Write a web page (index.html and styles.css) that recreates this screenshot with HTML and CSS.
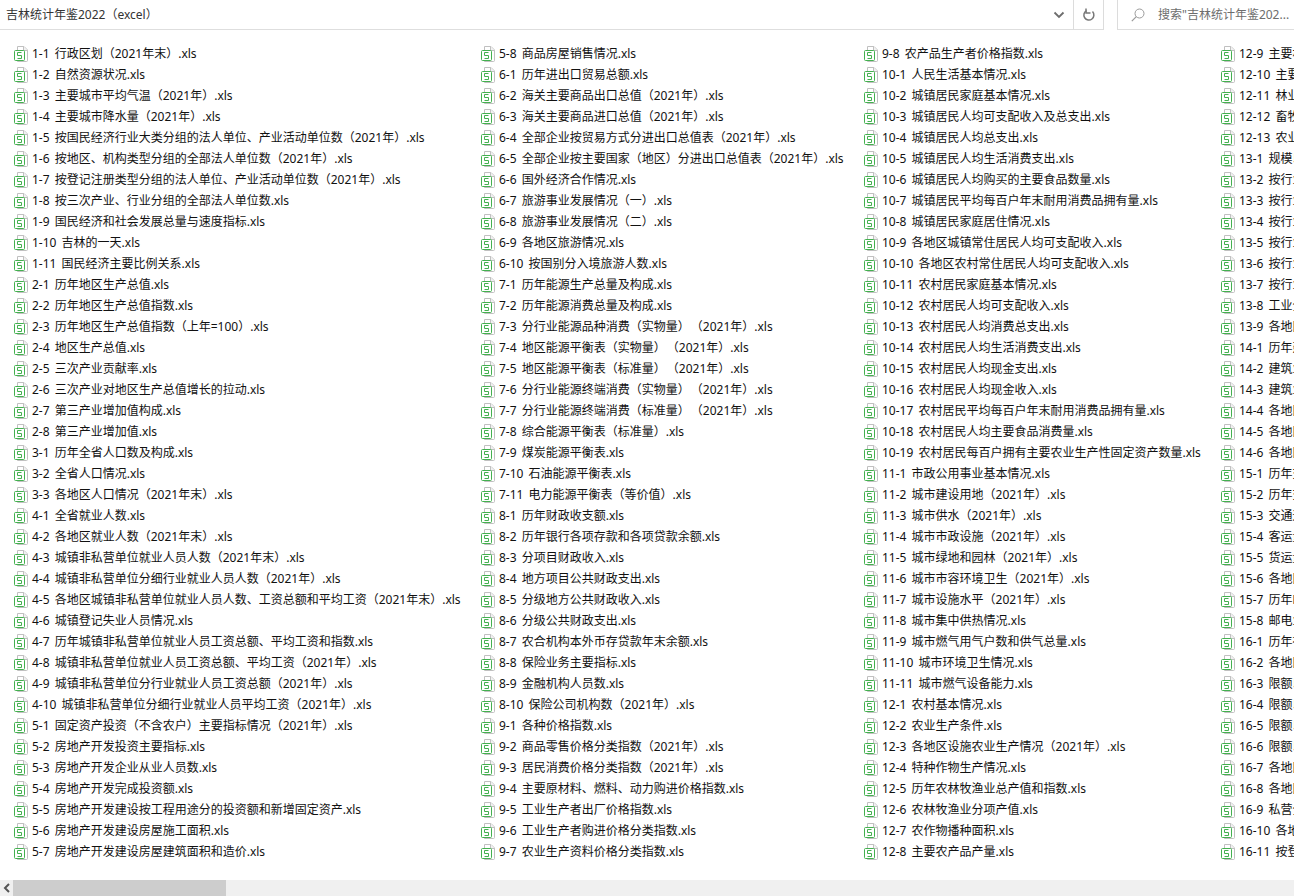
FILE: index.html
```html
<!DOCTYPE html>
<html lang="zh">
<head>
<meta charset="utf-8">
<title>吉林统计年鉴2022（excel）</title>
<link rel="stylesheet" href="styles.css">
</head>
<body>
<svg class="defs" width="0" height="0"><symbol id="xls" viewBox="0 0 14 16"><path d="M3.5 .5H10L13.500 4V14.500Q13.500 15.500 12.500 15.500H3.500Z" fill="#fff" stroke="#c0c0c0"/><path d="M9.500 .5V4.500H13.500" fill="#f2f2f2" stroke="#c0c0c0"/><rect x=".5" y="4.500" width="10" height="10" rx="1" fill="#fff" stroke="#43b04f"/><path d="M7.500 6.500H3.500V9.500H7.500V12.500H3.500" fill="none" stroke="#43b04f"/></symbol></svg>
<header class="bar">
<div class="path"><span class="title">吉林统计年鉴2022（excel）</span><svg class="chev" width="12" height="8" viewBox="0 0 12 8"><path d="M1.500 1.500L6 6L10.500 1.500" fill="none" stroke="#6d6d6d" stroke-width="1.800"/></svg></div>
<div class="refresh"><svg width="14" height="14" viewBox="0 0 14 14"><path d="M10.500 3.600A5 5 0 1 1 4.600 2.600" fill="none" stroke="#777" stroke-width="1.500"/><path d="M4 .5V5H8.500" fill="none" stroke="#777" stroke-width="1.500"/></svg></div>
<div class="search"><svg width="14" height="14" viewBox="0 0 14 14"><circle cx="8.500" cy="5.500" r="4.500" fill="none" stroke="#9b9b9b"/><path d="M5.300 8.700L.8 13.200" stroke="#9b9b9b" stroke-width="1.200"/></svg><span>搜索"吉林统计年鉴202...</span></div>
</header>
<main class="list">
<div class="col c1">
<div class="file"><svg><use href="#xls"/></svg><span>1-1 行政区划（2021年末）.xls</span></div>
<div class="file"><svg><use href="#xls"/></svg><span>1-2 自然资源状况.xls</span></div>
<div class="file"><svg><use href="#xls"/></svg><span>1-3 主要城市平均气温（2021年）.xls</span></div>
<div class="file"><svg><use href="#xls"/></svg><span>1-4 主要城市降水量（2021年）.xls</span></div>
<div class="file"><svg><use href="#xls"/></svg><span>1-5 按国民经济行业大类分组的法人单位、产业活动单位数（2021年）.xls</span></div>
<div class="file"><svg><use href="#xls"/></svg><span>1-6 按地区、机构类型分组的全部法人单位数（2021年）.xls</span></div>
<div class="file"><svg><use href="#xls"/></svg><span>1-7 按登记注册类型分组的法人单位、产业活动单位数（2021年）.xls</span></div>
<div class="file"><svg><use href="#xls"/></svg><span>1-8 按三次产业、行业分组的全部法人单位数.xls</span></div>
<div class="file"><svg><use href="#xls"/></svg><span>1-9 国民经济和社会发展总量与速度指标.xls</span></div>
<div class="file"><svg><use href="#xls"/></svg><span>1-10 吉林的一天.xls</span></div>
<div class="file"><svg><use href="#xls"/></svg><span>1-11 国民经济主要比例关系.xls</span></div>
<div class="file"><svg><use href="#xls"/></svg><span>2-1 历年地区生产总值.xls</span></div>
<div class="file"><svg><use href="#xls"/></svg><span>2-2 历年地区生产总值指数.xls</span></div>
<div class="file"><svg><use href="#xls"/></svg><span>2-3 历年地区生产总值指数（上年=100）.xls</span></div>
<div class="file"><svg><use href="#xls"/></svg><span>2-4 地区生产总值.xls</span></div>
<div class="file"><svg><use href="#xls"/></svg><span>2-5 三次产业贡献率.xls</span></div>
<div class="file"><svg><use href="#xls"/></svg><span>2-6 三次产业对地区生产总值增长的拉动.xls</span></div>
<div class="file"><svg><use href="#xls"/></svg><span>2-7 第三产业增加值构成.xls</span></div>
<div class="file"><svg><use href="#xls"/></svg><span>2-8 第三产业增加值.xls</span></div>
<div class="file"><svg><use href="#xls"/></svg><span>3-1 历年全省人口数及构成.xls</span></div>
<div class="file"><svg><use href="#xls"/></svg><span>3-2 全省人口情况.xls</span></div>
<div class="file"><svg><use href="#xls"/></svg><span>3-3 各地区人口情况（2021年末）.xls</span></div>
<div class="file"><svg><use href="#xls"/></svg><span>4-1 全省就业人数.xls</span></div>
<div class="file"><svg><use href="#xls"/></svg><span>4-2 各地区就业人数（2021年末）.xls</span></div>
<div class="file"><svg><use href="#xls"/></svg><span>4-3 城镇非私营单位就业人员人数（2021年末）.xls</span></div>
<div class="file"><svg><use href="#xls"/></svg><span>4-4 城镇非私营单位分细行业就业人员人数（2021年）.xls</span></div>
<div class="file"><svg><use href="#xls"/></svg><span>4-5 各地区城镇非私营单位就业人员人数、工资总额和平均工资（2021年末）.xls</span></div>
<div class="file"><svg><use href="#xls"/></svg><span>4-6 城镇登记失业人员情况.xls</span></div>
<div class="file"><svg><use href="#xls"/></svg><span>4-7 历年城镇非私营单位就业人员工资总额、平均工资和指数.xls</span></div>
<div class="file"><svg><use href="#xls"/></svg><span>4-8 城镇非私营单位就业人员工资总额、平均工资（2021年）.xls</span></div>
<div class="file"><svg><use href="#xls"/></svg><span>4-9 城镇非私营单位分行业就业人员工资总额（2021年）.xls</span></div>
<div class="file"><svg><use href="#xls"/></svg><span>4-10 城镇非私营单位分细行业就业人员平均工资（2021年）.xls</span></div>
<div class="file"><svg><use href="#xls"/></svg><span>5-1 固定资产投资（不含农户）主要指标情况（2021年）.xls</span></div>
<div class="file"><svg><use href="#xls"/></svg><span>5-2 房地产开发投资主要指标.xls</span></div>
<div class="file"><svg><use href="#xls"/></svg><span>5-3 房地产开发企业从业人员数.xls</span></div>
<div class="file"><svg><use href="#xls"/></svg><span>5-4 房地产开发完成投资额.xls</span></div>
<div class="file"><svg><use href="#xls"/></svg><span>5-5 房地产开发建设按工程用途分的投资额和新增固定资产.xls</span></div>
<div class="file"><svg><use href="#xls"/></svg><span>5-6 房地产开发建设房屋施工面积.xls</span></div>
<div class="file"><svg><use href="#xls"/></svg><span>5-7 房地产开发建设房屋建筑面积和造价.xls</span></div>
</div>
<div class="col c2">
<div class="file"><svg><use href="#xls"/></svg><span>5-8 商品房屋销售情况.xls</span></div>
<div class="file"><svg><use href="#xls"/></svg><span>6-1 历年进出口贸易总额.xls</span></div>
<div class="file"><svg><use href="#xls"/></svg><span>6-2 海关主要商品出口总值（2021年）.xls</span></div>
<div class="file"><svg><use href="#xls"/></svg><span>6-3 海关主要商品进口总值（2021年）.xls</span></div>
<div class="file"><svg><use href="#xls"/></svg><span>6-4 全部企业按贸易方式分进出口总值表（2021年）.xls</span></div>
<div class="file"><svg><use href="#xls"/></svg><span>6-5 全部企业按主要国家（地区）分进出口总值表（2021年）.xls</span></div>
<div class="file"><svg><use href="#xls"/></svg><span>6-6 国外经济合作情况.xls</span></div>
<div class="file"><svg><use href="#xls"/></svg><span>6-7 旅游事业发展情况（一）.xls</span></div>
<div class="file"><svg><use href="#xls"/></svg><span>6-8 旅游事业发展情况（二）.xls</span></div>
<div class="file"><svg><use href="#xls"/></svg><span>6-9 各地区旅游情况.xls</span></div>
<div class="file"><svg><use href="#xls"/></svg><span>6-10 按国别分入境旅游人数.xls</span></div>
<div class="file"><svg><use href="#xls"/></svg><span>7-1 历年能源生产总量及构成.xls</span></div>
<div class="file"><svg><use href="#xls"/></svg><span>7-2 历年能源消费总量及构成.xls</span></div>
<div class="file"><svg><use href="#xls"/></svg><span>7-3 分行业能源品种消费（实物量）<span class="nar"> </span>（2021年）.xls</span></div>
<div class="file"><svg><use href="#xls"/></svg><span>7-4 地区能源平衡表（实物量）<span class="nar"> </span>（2021年）.xls</span></div>
<div class="file"><svg><use href="#xls"/></svg><span>7-5 地区能源平衡表（标准量）<span class="nar"> </span>（2021年）.xls</span></div>
<div class="file"><svg><use href="#xls"/></svg><span>7-6 分行业能源终端消费（实物量）<span class="nar"> </span>（2021年）.xls</span></div>
<div class="file"><svg><use href="#xls"/></svg><span>7-7 分行业能源终端消费（标准量）<span class="nar"> </span>（2021年）.xls</span></div>
<div class="file"><svg><use href="#xls"/></svg><span>7-8 综合能源平衡表（标准量）.xls</span></div>
<div class="file"><svg><use href="#xls"/></svg><span>7-9 煤炭能源平衡表.xls</span></div>
<div class="file"><svg><use href="#xls"/></svg><span>7-10 石油能源平衡表.xls</span></div>
<div class="file"><svg><use href="#xls"/></svg><span>7-11 电力能源平衡表（等价值）.xls</span></div>
<div class="file"><svg><use href="#xls"/></svg><span>8-1 历年财政收支额.xls</span></div>
<div class="file"><svg><use href="#xls"/></svg><span>8-2 历年银行各项存款和各项贷款余额.xls</span></div>
<div class="file"><svg><use href="#xls"/></svg><span>8-3 分项目财政收入.xls</span></div>
<div class="file"><svg><use href="#xls"/></svg><span>8-4 地方项目公共财政支出.xls</span></div>
<div class="file"><svg><use href="#xls"/></svg><span>8-5 分级地方公共财政收入.xls</span></div>
<div class="file"><svg><use href="#xls"/></svg><span>8-6 分级公共财政支出.xls</span></div>
<div class="file"><svg><use href="#xls"/></svg><span>8-7 农合机构本外币存贷款年末余额.xls</span></div>
<div class="file"><svg><use href="#xls"/></svg><span>8-8 保险业务主要指标.xls</span></div>
<div class="file"><svg><use href="#xls"/></svg><span>8-9 金融机构人员数.xls</span></div>
<div class="file"><svg><use href="#xls"/></svg><span>8-10 保险公司机构数（2021年）.xls</span></div>
<div class="file"><svg><use href="#xls"/></svg><span>9-1 各种价格指数.xls</span></div>
<div class="file"><svg><use href="#xls"/></svg><span>9-2 商品零售价格分类指数（2021年）.xls</span></div>
<div class="file"><svg><use href="#xls"/></svg><span>9-3 居民消费价格分类指数（2021年）.xls</span></div>
<div class="file"><svg><use href="#xls"/></svg><span>9-4 主要原材料、燃料、动力购进价格指数.xls</span></div>
<div class="file"><svg><use href="#xls"/></svg><span>9-5 工业生产者出厂价格指数.xls</span></div>
<div class="file"><svg><use href="#xls"/></svg><span>9-6 工业生产者购进价格分类指数.xls</span></div>
<div class="file"><svg><use href="#xls"/></svg><span>9-7 农业生产资料价格分类指数.xls</span></div>
</div>
<div class="col c3">
<div class="file"><svg><use href="#xls"/></svg><span>9-8 农产品生产者价格指数.xls</span></div>
<div class="file"><svg><use href="#xls"/></svg><span>10-1 人民生活基本情况.xls</span></div>
<div class="file"><svg><use href="#xls"/></svg><span>10-2 城镇居民家庭基本情况.xls</span></div>
<div class="file"><svg><use href="#xls"/></svg><span>10-3 城镇居民人均可支配收入及总支出.xls</span></div>
<div class="file"><svg><use href="#xls"/></svg><span>10-4 城镇居民人均总支出.xls</span></div>
<div class="file"><svg><use href="#xls"/></svg><span>10-5 城镇居民人均生活消费支出.xls</span></div>
<div class="file"><svg><use href="#xls"/></svg><span>10-6 城镇居民人均购买的主要食品数量.xls</span></div>
<div class="file"><svg><use href="#xls"/></svg><span>10-7 城镇居民平均每百户年末耐用消费品拥有量.xls</span></div>
<div class="file"><svg><use href="#xls"/></svg><span>10-8 城镇居民家庭居住情况.xls</span></div>
<div class="file"><svg><use href="#xls"/></svg><span>10-9 各地区城镇常住居民人均可支配收入.xls</span></div>
<div class="file"><svg><use href="#xls"/></svg><span>10-10 各地区农村常住居民人均可支配收入.xls</span></div>
<div class="file"><svg><use href="#xls"/></svg><span>10-11 农村居民家庭基本情况.xls</span></div>
<div class="file"><svg><use href="#xls"/></svg><span>10-12 农村居民人均可支配收入.xls</span></div>
<div class="file"><svg><use href="#xls"/></svg><span>10-13 农村居民人均消费总支出.xls</span></div>
<div class="file"><svg><use href="#xls"/></svg><span>10-14 农村居民人均生活消费支出.xls</span></div>
<div class="file"><svg><use href="#xls"/></svg><span>10-15 农村居民人均现金支出.xls</span></div>
<div class="file"><svg><use href="#xls"/></svg><span>10-16 农村居民人均现金收入.xls</span></div>
<div class="file"><svg><use href="#xls"/></svg><span>10-17 农村居民平均每百户年末耐用消费品拥有量.xls</span></div>
<div class="file"><svg><use href="#xls"/></svg><span>10-18 农村居民人均主要食品消费量.xls</span></div>
<div class="file"><svg><use href="#xls"/></svg><span>10-19 农村居民每百户拥有主要农业生产性固定资产数量.xls</span></div>
<div class="file"><svg><use href="#xls"/></svg><span>11-1 市政公用事业基本情况.xls</span></div>
<div class="file"><svg><use href="#xls"/></svg><span>11-2 城市建设用地（2021年）.xls</span></div>
<div class="file"><svg><use href="#xls"/></svg><span>11-3 城市供水（2021年）.xls</span></div>
<div class="file"><svg><use href="#xls"/></svg><span>11-4 城市市政设施（2021年）.xls</span></div>
<div class="file"><svg><use href="#xls"/></svg><span>11-5 城市绿地和园林（2021年）.xls</span></div>
<div class="file"><svg><use href="#xls"/></svg><span>11-6 城市市容环境卫生（2021年）.xls</span></div>
<div class="file"><svg><use href="#xls"/></svg><span>11-7 城市设施水平（2021年）.xls</span></div>
<div class="file"><svg><use href="#xls"/></svg><span>11-8 城市集中供热情况.xls</span></div>
<div class="file"><svg><use href="#xls"/></svg><span>11-9 城市燃气用气户数和供气总量.xls</span></div>
<div class="file"><svg><use href="#xls"/></svg><span>11-10 城市环境卫生情况.xls</span></div>
<div class="file"><svg><use href="#xls"/></svg><span>11-11 城市燃气设备能力.xls</span></div>
<div class="file"><svg><use href="#xls"/></svg><span>12-1 农村基本情况.xls</span></div>
<div class="file"><svg><use href="#xls"/></svg><span>12-2 农业生产条件.xls</span></div>
<div class="file"><svg><use href="#xls"/></svg><span>12-3 各地区设施农业生产情况（2021年）.xls</span></div>
<div class="file"><svg><use href="#xls"/></svg><span>12-4 特种作物生产情况.xls</span></div>
<div class="file"><svg><use href="#xls"/></svg><span>12-5 历年农林牧渔业总产值和指数.xls</span></div>
<div class="file"><svg><use href="#xls"/></svg><span>12-6 农林牧渔业分项产值.xls</span></div>
<div class="file"><svg><use href="#xls"/></svg><span>12-7 农作物播种面积.xls</span></div>
<div class="file"><svg><use href="#xls"/></svg><span>12-8 主要农产品产量.xls</span></div>
</div>
<div class="col c4">
<div class="file"><svg><use href="#xls"/></svg><span>12-9 主要林产品产量.xls</span></div>
<div class="file"><svg><use href="#xls"/></svg><span>12-10 主要水果产量.xls</span></div>
<div class="file"><svg><use href="#xls"/></svg><span>12-11 林业生产情况.xls</span></div>
<div class="file"><svg><use href="#xls"/></svg><span>12-12 畜牧业生产情况.xls</span></div>
<div class="file"><svg><use href="#xls"/></svg><span>12-13 农业机械情况.xls</span></div>
<div class="file"><svg><use href="#xls"/></svg><span>13-1 规模以上工业.xls</span></div>
<div class="file"><svg><use href="#xls"/></svg><span>13-2 按行业分组.xls</span></div>
<div class="file"><svg><use href="#xls"/></svg><span>13-3 按行业分组.xls</span></div>
<div class="file"><svg><use href="#xls"/></svg><span>13-4 按行业分组.xls</span></div>
<div class="file"><svg><use href="#xls"/></svg><span>13-5 按行业分组.xls</span></div>
<div class="file"><svg><use href="#xls"/></svg><span>13-6 按行业分组.xls</span></div>
<div class="file"><svg><use href="#xls"/></svg><span>13-7 按行业分组.xls</span></div>
<div class="file"><svg><use href="#xls"/></svg><span>13-8 工业企业.xls</span></div>
<div class="file"><svg><use href="#xls"/></svg><span>13-9 各地区工业.xls</span></div>
<div class="file"><svg><use href="#xls"/></svg><span>14-1 历年建筑业.xls</span></div>
<div class="file"><svg><use href="#xls"/></svg><span>14-2 建筑业企业.xls</span></div>
<div class="file"><svg><use href="#xls"/></svg><span>14-3 建筑业企业.xls</span></div>
<div class="file"><svg><use href="#xls"/></svg><span>14-4 各地区建筑业.xls</span></div>
<div class="file"><svg><use href="#xls"/></svg><span>14-5 各地区建筑业.xls</span></div>
<div class="file"><svg><use href="#xls"/></svg><span>14-6 各地区建筑业.xls</span></div>
<div class="file"><svg><use href="#xls"/></svg><span>15-1 历年交通.xls</span></div>
<div class="file"><svg><use href="#xls"/></svg><span>15-2 历年交通.xls</span></div>
<div class="file"><svg><use href="#xls"/></svg><span>15-3 交通运输.xls</span></div>
<div class="file"><svg><use href="#xls"/></svg><span>15-4 客运量.xls</span></div>
<div class="file"><svg><use href="#xls"/></svg><span>15-5 货运量.xls</span></div>
<div class="file"><svg><use href="#xls"/></svg><span>15-6 各地区公路.xls</span></div>
<div class="file"><svg><use href="#xls"/></svg><span>15-7 历年邮电.xls</span></div>
<div class="file"><svg><use href="#xls"/></svg><span>15-8 邮电业务.xls</span></div>
<div class="file"><svg><use href="#xls"/></svg><span>16-1 历年社会.xls</span></div>
<div class="file"><svg><use href="#xls"/></svg><span>16-2 各地区社会.xls</span></div>
<div class="file"><svg><use href="#xls"/></svg><span>16-3 限额以上.xls</span></div>
<div class="file"><svg><use href="#xls"/></svg><span>16-4 限额以上.xls</span></div>
<div class="file"><svg><use href="#xls"/></svg><span>16-5 限额以上.xls</span></div>
<div class="file"><svg><use href="#xls"/></svg><span>16-6 限额以上.xls</span></div>
<div class="file"><svg><use href="#xls"/></svg><span>16-7 各地区商品.xls</span></div>
<div class="file"><svg><use href="#xls"/></svg><span>16-8 各地区商品.xls</span></div>
<div class="file"><svg><use href="#xls"/></svg><span>16-9 私营企业.xls</span></div>
<div class="file"><svg><use href="#xls"/></svg><span>16-10 各地区.xls</span></div>
<div class="file"><svg><use href="#xls"/></svg><span>16-11 按登记.xls</span></div>
</div>
</main>
<footer class="scroll"><div class="arrow"><svg width="8" height="10" viewBox="0 0 8 10"><path d="M6 1L2 5L6 9" fill="none" stroke="#555" stroke-width="2"/></svg></div><div class="thumb"></div></footer>
</body>
</html>
```
FILE: styles.css
```css
html, body { margin: 0; padding: 0; height: 896px; overflow: hidden; background: #fff; }
body { display: flex; flex-direction: column; color: #111; font: 12px/21px "Noto Sans", "Noto Sans CJK SC", sans-serif; }
.defs { position: absolute; }
.bar { display: flex; height: 30px; flex: none; }
.path { width: 1104px; flex: none; display: flex; align-items: center; justify-content: space-between; padding: 0 8px 0 6px; box-sizing: border-box; border-bottom: 1px solid #dedede; }
.title { color: #333; }
.chev { margin-right: 31px; }
.refresh { width: 31px; margin-left: -31px; flex: none; display: flex; align-items: center; justify-content: center; box-sizing: border-box; border-left: 1px solid #dcdcdc; border-right: 1px solid #dcdcdc; border-bottom: 1px solid #dedede; }
.search { margin-left: 13px; flex: 1; display: flex; align-items: center; gap: 13px; padding-left: 13px; box-sizing: border-box; color: #6d6d6d; border-left: 1px solid #dcdcdc; border-bottom: 1px solid #dedede; }
.list { flex: 1; display: flex; padding-top: 13px; padding-left: 14px; overflow: hidden; }
.col { flex: none; min-width: 0; }
.c1 { width: 467px; }
.c2 { width: 383px; }
.c3 { width: 357px; }
.c4 { width: 73px; overflow: hidden; }
.file { display: flex; align-items: center; height: 21px; gap: 4px; white-space: nowrap; word-spacing: 2px; }
.nar { word-spacing: -2px; }
.file svg { width: 14px; height: 16px; flex: none; }
.scroll { height: 16px; flex: none; display: flex; background: #f0f0f0; }
.arrow { width: 13px; display: flex; align-items: center; justify-content: center; }
.thumb { width: 213px; background: #cdcdcd; }
```
